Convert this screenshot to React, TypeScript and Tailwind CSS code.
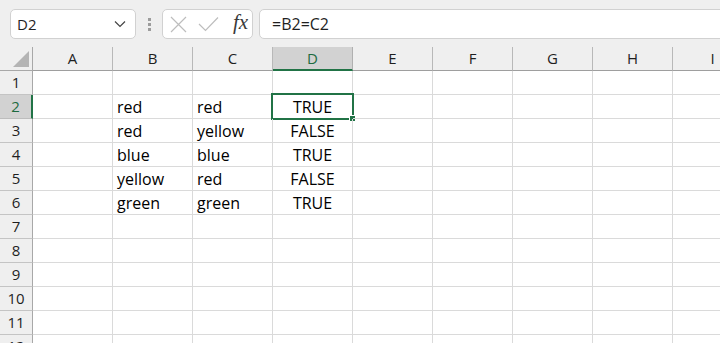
import React from 'react';

const cols = ['A', 'B', 'C', 'D', 'E', 'F', 'G', 'H', 'I'];

const data: Record<number, string[]> = {
  2: ['', 'red', 'red', 'TRUE'],
  3: ['', 'red', 'yellow', 'FALSE'],
  4: ['', 'blue', 'blue', 'TRUE'],
  5: ['', 'yellow', 'red', 'FALSE'],
  6: ['', 'green', 'green', 'TRUE'],
};

const rows = [1, 2, 3, 4, 5, 6, 7, 8, 9, 10, 11, 12];

function FormulaBar() {
  return (
    <div className="h-[47px] bg-[#efefef] flex items-start pt-[9px] pl-[10px] shrink-0">
      <div className="w-[126px] h-[30px] shrink-0 bg-white border border-[#d1d1d1] rounded-[5px] flex items-center justify-between pl-[6px] pr-[8px]">
        <span className="text-[15px] text-[#1f1f1f]">D2</span>
        <svg width="12" height="8" viewBox="0 0 12 8" className="mr-[1px]">
          <path d="M1 1.5 L6 6.5 L11 1.5" fill="none" stroke="#444" strokeWidth="1.2" />
        </svg>
      </div>
      <div className="w-[26px] h-[30px] shrink-0 flex flex-col items-center justify-center gap-[2px]">
        <div className="w-[3px] h-[3px] bg-[#9c9c9c]" />
        <div className="w-[3px] h-[3px] bg-[#9c9c9c]" />
        <div className="w-[3px] h-[3px] bg-[#9c9c9c]" />
      </div>
      <div className="w-[91px] h-[30px] shrink-0 bg-white border border-[#d1d1d1] rounded-[5px] flex items-center pl-[6px]">
        <svg width="17" height="17" viewBox="0 0 17 17" className="ml-[1px]">
          <path d="M1 1 L16 16 M16 1 L1 16" fill="none" stroke="#bdbdbd" strokeWidth="1.2" />
        </svg>
        <svg width="21" height="16" viewBox="0 0 21 16" className="ml-[11px]">
          <path d="M1 8 L7.5 14.5 L20 1.5" fill="none" stroke="#bdbdbd" strokeWidth="1.2" />
        </svg>
        <span
          className="ml-[14px] text-[21px] italic text-[#3a3a3a] leading-none -mt-[3px]"
          style={{ fontFamily: '"Liberation Serif", serif' }}
        >
          fx
        </span>
      </div>
      <div className="ml-[6px] w-[480px] h-[30px] shrink-0 bg-white border border-[#d1d1d1] rounded-l-[5px] flex items-center pl-[12px]">
        <span className="text-[16px] text-[#1f1f1f]">=B2=C2</span>
      </div>
    </div>
  );
}

function HeaderRow() {
  return (
    <div className="flex h-[24px] shrink-0 bg-[#efefef]">
      <div className="relative w-[33px] h-[24px] shrink-0 border-r border-b border-[#a8a8a8]">
        <svg width="16" height="16" viewBox="0 0 16 16" className="absolute left-[13px] top-[4px]">
          <path d="M16 0 L16 16 L0 16 Z" fill="#b4b4b4" />
        </svg>
      </div>
      {cols.map((c) =>
        c === 'D' ? (
          <div
            key={c}
            className="w-[80px] h-[24px] shrink-0 bg-[#d2d2d2] border-r border-r-[#b0b0b0] border-b-2 border-b-[#217346] flex items-center justify-center text-[15px] text-[#1d6b40]"
          >
            {c}
          </div>
        ) : (
          <div
            key={c}
            className="w-[80px] h-[24px] shrink-0 border-r border-r-[#b8b8b8] border-b border-b-[#9e9e9e] flex items-center justify-center text-[15px] text-[#1f1f1f]"
          >
            {c}
          </div>
        )
      )}
    </div>
  );
}

function Row({ n }: { n: number }) {
  const vals = data[n] ?? [];
  const active = n === 2;
  return (
    <div className="flex h-[24px] shrink-0">
      <div
        className={
          active
            ? 'w-[33px] h-[24px] shrink-0 bg-[#d2d2d2] border-r-2 border-r-[#217346] border-b border-b-[#bdbdbd] flex items-center justify-center text-[15px] text-[#1d6b40]'
            : 'w-[33px] h-[24px] shrink-0 bg-[#efefef] border-r border-r-[#a8a8a8] border-b border-b-[#c4c4c4] flex items-center justify-center text-[15px] text-[#1f1f1f]'
        }
      >
        {n}
      </div>
      {cols.map((c, i) => {
        const v = vals[i] ?? '';
        const center = c === 'D';
        return (
          <div
            key={c}
            className={
              'relative w-[80px] h-[24px] shrink-0 border-r border-b border-[#dadada] flex items-center px-[4px] text-[16px] leading-[22px] text-black ' +
              (center ? 'justify-center' : 'justify-start')
            }
          >
            {v}
            {active && c === 'D' && (
              <div className="absolute -left-[2px] -top-[2px] w-[83px] h-[27px] border-2 border-[#217346]">
                <div className="absolute -right-[4px] -bottom-[4px] w-[7px] h-[7px] bg-[#217346] border border-white" />
              </div>
            )}
          </div>
        );
      })}
    </div>
  );
}

export default function App() {
  return (
    <div
      className="w-[720px] h-[343px] overflow-hidden bg-white flex flex-col"
      style={{ fontFamily: '"Open Sans", "Noto Sans", sans-serif' }}
    >
      <FormulaBar />
      <HeaderRow />
      {rows.map((n) => (
        <Row key={n} n={n} />
      ))}
    </div>
  );
}
